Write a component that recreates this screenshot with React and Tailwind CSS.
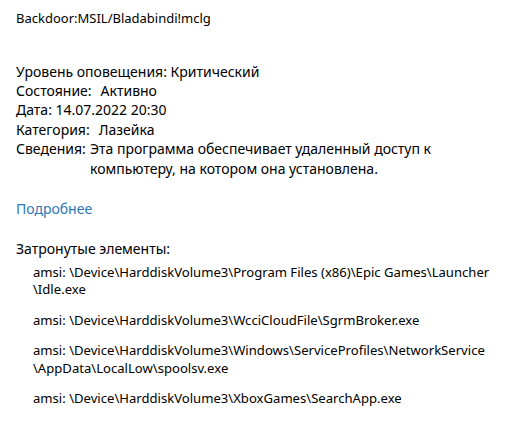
import React from "react";

const items = [
  ["amsi: \\Device\\HarddiskVolume3\\Program Files (x86)\\Epic Games\\Launcher", "\\Idle.exe"],
  ["amsi: \\Device\\HarddiskVolume3\\WcciCloudFile\\SgrmBroker.exe"],
  ["amsi: \\Device\\HarddiskVolume3\\Windows\\ServiceProfiles\\NetworkService", "\\AppData\\LocalLow\\spoolsv.exe"],
  ["amsi: \\Device\\HarddiskVolume3\\XboxGames\\SearchApp.exe"],
];

export default function App() {
  return (
    <div className="w-[516px] h-[428px] bg-white text-black text-[14px] pl-4 pt-[8px] overflow-hidden font-['Noto_Sans',sans-serif]">
      <div className="text-[13px] leading-[20px]">Backdoor:MSIL/Bladabindi!mclg</div>

      <div className="mt-[33.5px] leading-[19.4px]">
        <div>Уровень оповещения: Критический</div>
        <div>
          Состояние:<span className="ml-[9px]">Активно</span>
        </div>
        <div>Дата: 14.07.2022 20:30</div>
        <div>
          Категория:<span className="ml-[9px]">Лазейка</span>
        </div>
        <div className="flex">
          <div className="w-[74px] shrink-0">Сведения:</div>
          <div>
            <div>Эта программа обеспечивает удаленный доступ к</div>
            <div>компьютеру, на котором она установлена.</div>
          </div>
        </div>
      </div>

      <div className="mt-[21px] leading-[19.4px] text-[#2b79b5]">Подробнее</div>

      <div className="mt-[21px] leading-[19.4px]">Затронутые элементы:</div>

      <div className="mt-[5px] pl-[17px] flex flex-col gap-[13px] text-[13.1px] leading-[17.5px]">
        {items.map((lines, i) => (
          <div key={i}>
            {lines.map((l, j) => (
              <div key={j} className="whitespace-nowrap">{l}</div>
            ))}
          </div>
        ))}
      </div>
    </div>
  );
}
